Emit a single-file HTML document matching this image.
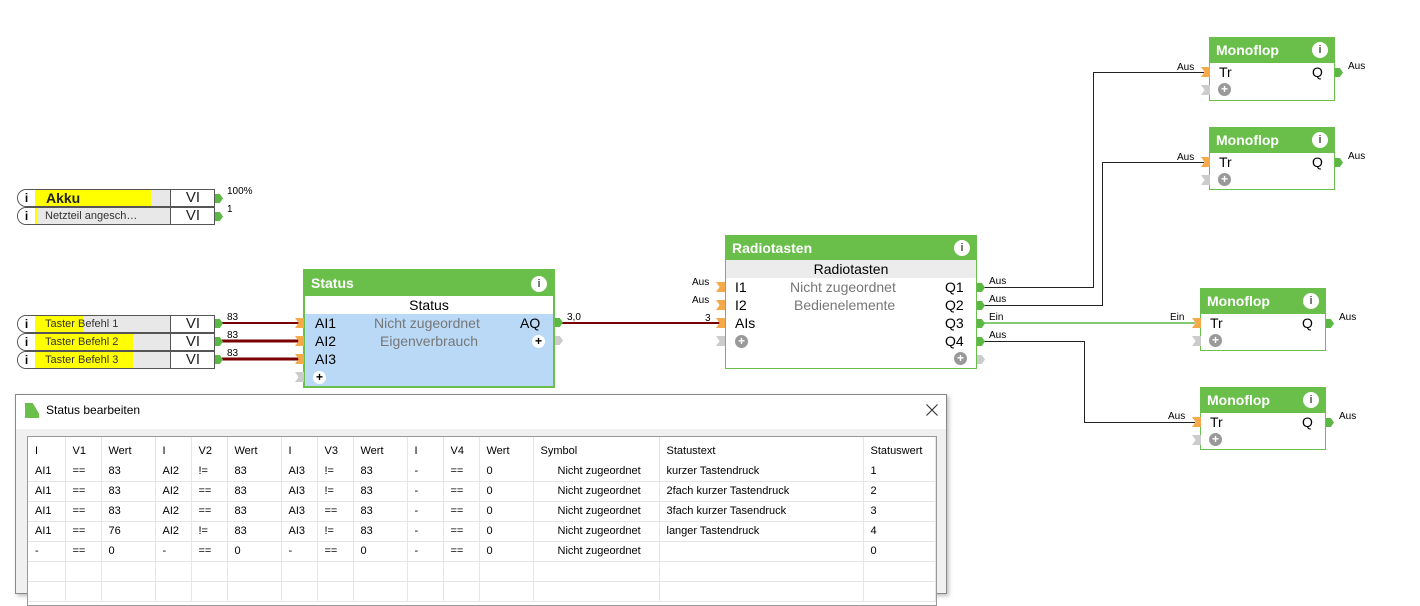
<!DOCTYPE html>
<html><head><meta charset="utf-8"><style>
*{box-sizing:border-box;margin:0;padding:0}
body{width:1420px;height:591px;background:#fff;position:relative;overflow:hidden;font-family:"Liberation Sans",sans-serif;color:#000}
.a{position:absolute}
.row{position:absolute;left:17px;width:198px;height:18px;border:1px solid #555;border-radius:9px 0 0 9px;background:#e8e8e8;overflow:hidden}
.row .i{position:absolute;left:0;top:0;width:17px;height:16px;background:#fff;font-weight:bold;font-size:12px;text-align:center;line-height:16px}
.row .y{position:absolute;left:17px;top:0;height:16px;background:#ffff00}
.row .t{position:absolute;left:27px;top:0;font-size:11px;line-height:16px;color:#333}
.row .vi{position:absolute;left:152px;top:0;width:45px;height:16px;border-left:1px solid #555;background:#fff;text-align:center;font-size:15px;line-height:16px;color:#222}
.oc{position:absolute;width:8px;height:9px;background:#5cb844;clip-path:polygon(0 0,60% 0,100% 50%,60% 100%,0 100%)}
.ic{position:absolute;width:9px;height:10px;background:#f4a94a;clip-path:polygon(0 0,100% 0,100% 100%,0 100%,40% 50%)}
.gc{position:absolute;width:9px;height:10px;background:#ccc;clip-path:polygon(0 0,100% 0,100% 100%,0 100%,40% 50%)}
.goc{position:absolute;width:8px;height:9px;background:#ccc;clip-path:polygon(0 0,60% 0,100% 50%,60% 100%,0 100%)}
.blk{position:absolute;border:1px solid #6abf4b;background:#fff}
.hd{background:#6abf4b;color:#fff;font-weight:bold;font-size:14px;padding-left:6px;position:relative}
.info{position:absolute;right:6px;width:16px;height:16px;border-radius:50%;background:#fff;color:#555;font-size:11px;font-weight:bold;text-align:center;line-height:16px}
.lab{position:absolute;font-size:10px}
.plus{position:absolute;width:13px;height:13px;border-radius:50%;background:#999;color:#fff;font-size:12px;font-weight:bold;text-align:center;line-height:13px}
.f14{position:absolute;font-size:14px}
.gr{color:#777}
table{border-collapse:collapse;font-size:11px;font-family:"Liberation Sans",sans-serif}
td{height:20px;border-right:1px solid #e6e6e6;border-bottom:1px solid #e6e6e6;padding-left:7px;vertical-align:middle;white-space:nowrap}
tr.h td{height:24px;border-bottom:none;padding-top:3px}
</style></head><body>

<svg class="a" style="left:0;top:0" width="1420" height="591">
<g stroke="#7a0000" fill="none">
<line x1="222" y1="323" x2="303" y2="323" stroke-width="2"/>
<line x1="222" y1="341" x2="303" y2="341" stroke-width="3"/>
<line x1="222" y1="359" x2="303" y2="359" stroke-width="3"/>
<line x1="562" y1="323" x2="720" y2="323" stroke-width="2"/>
</g>
<g stroke="#222" fill="none" stroke-width="1">
<polyline points="984,287.5 1093.5,287.5 1093.5,72.5 1204,72.5"/>
<polyline points="984,305.5 1102.5,305.5 1102.5,162.5 1204,162.5"/>
<polyline points="984,341.5 1084.5,341.5 1084.5,422.5 1195,422.5"/>
</g>
<line x1="984" y1="323" x2="1195" y2="323" stroke="#5cb844" stroke-width="1.5"/>
</svg>

<div class="row" style="top:189px"><div class="i">i</div><div class="y" style="width:116px"></div><div class="t" style="font-size:14px;font-weight:bold;color:#222;left:28px">Akku</div><div class="vi">VI</div></div>
<div class="row" style="top:207px"><div class="i">i</div><div class="y" style="width:2px"></div><div class="t">Netzteil angesch…</div><div class="vi">VI</div></div>
<div class="oc" style="left:215px;top:194px"></div><div class="lab" style="left:227px;top:186px">100%</div>
<div class="oc" style="left:215px;top:212px"></div><div class="lab" style="left:227px;top:204px">1</div>

<div class="row" style="top:315px"><div class="i">i</div><div class="y" style="width:48px"></div><div class="t">Taster Befehl 1</div><div class="vi">VI</div></div>
<div class="row" style="top:333px"><div class="i">i</div><div class="y" style="width:98px"></div><div class="t">Taster Befehl 2</div><div class="vi">VI</div></div>
<div class="row" style="top:351px"><div class="i">i</div><div class="y" style="width:98px"></div><div class="t">Taster Befehl 3</div><div class="vi">VI</div></div>
<div class="oc" style="left:215px;top:319px"></div><div class="lab" style="left:227px;top:312px">83</div>
<div class="oc" style="left:215px;top:337px"></div><div class="lab" style="left:227px;top:330px">83</div>
<div class="oc" style="left:215px;top:355px"></div><div class="lab" style="left:227px;top:348px">83</div>

<div class="blk" style="left:303px;top:269px;width:252px;height:119px;border:2px solid #6abf4b;background:#b9d9f7">
<div class="hd" style="height:25px;line-height:25px">Status<div class="info" style="top:5px">i</div></div>
<div style="background:#fff;height:18px;text-align:center;font-size:14px;line-height:18px">Status</div>
</div>
<div class="ic" style="left:295px;top:318px"></div><div class="ic" style="left:295px;top:336px"></div><div class="ic" style="left:295px;top:354px"></div><div class="gc" style="left:295px;top:372px"></div>
<div class="f14" style="left:315px;top:315px">AI1</div><div class="f14" style="left:315px;top:333px">AI2</div><div class="f14" style="left:315px;top:351px">AI3</div>
<div class="plus" style="left:313px;top:371px;background:#fff;color:#000">+</div>
<div class="f14 gr" style="left:374px;top:315px">Nicht zugeordnet</div>
<div class="f14 gr" style="left:380px;top:333px">Eigenverbrauch</div>
<div class="f14" style="left:520px;top:315px">AQ</div>
<div class="plus" style="left:532px;top:335px;background:#fff;color:#000">+</div>
<div class="oc" style="left:555px;top:318px"></div><div class="goc" style="left:555px;top:336px"></div>
<div class="lab" style="left:567px;top:312px">3,0</div>

<div class="blk" style="left:725px;top:235px;width:252px;height:134px">
<div class="hd" style="height:24px;line-height:24px">Radiotasten<div class="info" style="top:4px">i</div></div>
<div style="background:#ececec;height:18px;text-align:center;font-size:14px;line-height:18px">Radiotasten</div>
</div>
<div class="lab" style="left:692px;top:277px">Aus</div><div class="lab" style="left:692px;top:295px">Aus</div><div class="lab" style="left:705px;top:313px">3</div>
<div class="ic" style="left:716px;top:282px"></div><div class="ic" style="left:716px;top:300px"></div><div class="ic" style="left:716px;top:318px"></div><div class="gc" style="left:716px;top:336px"></div>
<div class="f14" style="left:735px;top:279px">I1</div><div class="f14" style="left:735px;top:297px">I2</div><div class="f14" style="left:735px;top:315px">AIs</div>
<div class="plus" style="left:735px;top:335px">+</div>
<div class="f14 gr" style="left:790px;top:279px">Nicht zugeordnet</div>
<div class="f14 gr" style="left:794px;top:297px">Bedienelemente</div>
<div class="f14" style="left:945px;top:279px">Q1</div><div class="f14" style="left:945px;top:297px">Q2</div><div class="f14" style="left:945px;top:315px">Q3</div><div class="f14" style="left:945px;top:333px">Q4</div>
<div class="plus" style="left:954px;top:352px">+</div>
<div class="oc" style="left:977px;top:283px"></div><div class="oc" style="left:977px;top:301px"></div><div class="oc" style="left:977px;top:319px"></div><div class="oc" style="left:977px;top:337px"></div><div class="goc" style="left:977px;top:355px"></div>
<div class="lab" style="left:989px;top:276px">Aus</div><div class="lab" style="left:989px;top:294px">Aus</div><div class="lab" style="left:989px;top:312px">Ein</div><div class="lab" style="left:989px;top:330px">Aus</div>

<div class="blk" style="left:1209px;top:37px;width:126px;height:64px"><div class="hd" style="height:25px;line-height:24px">Monoflop<div class="info" style="top:4px">i</div></div></div>
<div class="ic" style="left:1201px;top:67px"></div><div class="gc" style="left:1201px;top:85px"></div>
<div class="f14" style="left:1219px;top:64px">Tr</div><div class="f14" style="left:1312px;top:64px">Q</div><div class="plus" style="left:1218px;top:83px">+</div>
<div class="oc" style="left:1335px;top:68px"></div><div class="lab" style="left:1177px;top:62px">Aus</div><div class="lab" style="left:1348px;top:61px">Aus</div>

<div class="blk" style="left:1209px;top:127px;width:126px;height:63px"><div class="hd" style="height:25px;line-height:24px">Monoflop<div class="info" style="top:4px">i</div></div></div>
<div class="ic" style="left:1201px;top:157px"></div><div class="gc" style="left:1201px;top:175px"></div>
<div class="f14" style="left:1219px;top:154px">Tr</div><div class="f14" style="left:1312px;top:154px">Q</div><div class="plus" style="left:1218px;top:173px">+</div>
<div class="oc" style="left:1335px;top:158px"></div><div class="lab" style="left:1177px;top:152px">Aus</div><div class="lab" style="left:1348px;top:151px">Aus</div>

<div class="blk" style="left:1200px;top:288px;width:126px;height:63px"><div class="hd" style="height:25px;line-height:24px">Monoflop<div class="info" style="top:4px">i</div></div></div>
<div class="ic" style="left:1192px;top:318px"></div><div class="gc" style="left:1192px;top:336px"></div>
<div class="f14" style="left:1210px;top:315px">Tr</div><div class="f14" style="left:1302px;top:315px">Q</div><div class="plus" style="left:1209px;top:334px">+</div>
<div class="oc" style="left:1326px;top:319px"></div><div class="lab" style="left:1170px;top:312px">Ein</div><div class="lab" style="left:1339px;top:312px">Aus</div>

<div class="blk" style="left:1200px;top:387px;width:126px;height:63px"><div class="hd" style="height:25px;line-height:24px">Monoflop<div class="info" style="top:4px">i</div></div></div>
<div class="ic" style="left:1192px;top:417px"></div><div class="gc" style="left:1192px;top:435px"></div>
<div class="f14" style="left:1210px;top:414px">Tr</div><div class="f14" style="left:1302px;top:414px">Q</div><div class="plus" style="left:1209px;top:433px">+</div>
<div class="oc" style="left:1326px;top:418px"></div><div class="lab" style="left:1168px;top:411px">Aus</div><div class="lab" style="left:1339px;top:411px">Aus</div>

<div class="a" style="left:15px;top:394px;width:932px;height:200px;border:1px solid #888;background:#f0f0f0;box-shadow:2px 2px 4px rgba(0,0,0,.25)">
<div style="height:34px;background:#fff;position:relative">
<div class="a" style="left:9px;top:8px;width:14px;height:15px;background:#6abf4b;clip-path:polygon(0 0,55% 0,100% 70%,100% 100%,0 100%)"></div>
<div class="a" style="left:30px;top:8px;font-size:12px">Status bearbeiten</div>
<svg class="a" style="left:910px;top:9px" width="12" height="12"><path d="M0.5 0.5L11.5 11.5M11.5 0.5L0.5 11.5" stroke="#333" stroke-width="1.1"/></svg>
</div>
<div class="a" style="left:11px;top:41px;width:910px;height:170px;border:1px solid #999;background:#fff;overflow:hidden">
<table>
<tr class="h"><td style="width:37px">I</td><td style="width:36px">V1</td><td style="width:54px">Wert</td><td style="width:36px">I</td><td style="width:36px">V2</td><td style="width:54px">Wert</td><td style="width:36px">I</td><td style="width:36px">V3</td><td style="width:54px">Wert</td><td style="width:36px">I</td><td style="width:36px">V4</td><td style="width:54px">Wert</td><td style="width:126px">Symbol</td><td style="width:204px">Statustext</td><td style="width:72px">Statuswert</td></tr>
<tr><td>AI1</td><td>==</td><td>83</td><td>AI2</td><td>!=</td><td>83</td><td>AI3</td><td>!=</td><td>83</td><td>-</td><td>==</td><td>0</td><td style="padding-left:24px">Nicht zugeordnet</td><td>kurzer Tastendruck</td><td>1</td></tr>
<tr><td>AI1</td><td>==</td><td>83</td><td>AI2</td><td>==</td><td>83</td><td>AI3</td><td>!=</td><td>83</td><td>-</td><td>==</td><td>0</td><td style="padding-left:24px">Nicht zugeordnet</td><td>2fach kurzer Tastendruck</td><td>2</td></tr>
<tr><td>AI1</td><td>==</td><td>83</td><td>AI2</td><td>==</td><td>83</td><td>AI3</td><td>==</td><td>83</td><td>-</td><td>==</td><td>0</td><td style="padding-left:24px">Nicht zugeordnet</td><td>3fach kurzer Tasendruck</td><td>3</td></tr>
<tr><td>AI1</td><td>==</td><td>76</td><td>AI2</td><td>!=</td><td>83</td><td>AI3</td><td>!=</td><td>83</td><td>-</td><td>==</td><td>0</td><td style="padding-left:24px">Nicht zugeordnet</td><td>langer Tastendruck</td><td>4</td></tr>
<tr><td>-</td><td>==</td><td>0</td><td>-</td><td>==</td><td>0</td><td>-</td><td>==</td><td>0</td><td>-</td><td>==</td><td>0</td><td style="padding-left:24px">Nicht zugeordnet</td><td></td><td>0</td></tr>
<tr><td></td><td></td><td></td><td></td><td></td><td></td><td></td><td></td><td></td><td></td><td></td><td></td><td></td><td></td><td></td></tr>
<tr><td></td><td></td><td></td><td></td><td></td><td></td><td></td><td></td><td></td><td></td><td></td><td></td><td></td><td></td><td></td></tr>
</table>
</div>
</div>
</body></html>
